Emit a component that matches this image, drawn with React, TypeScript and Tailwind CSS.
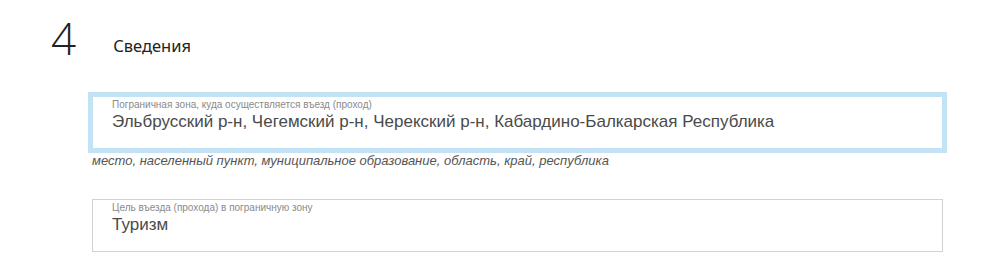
import React from "react";

function Field({
  label,
  value,
  focused
}: {
  label: string;
  value: string;
  focused?: boolean;
}) {
  return (
    <div
      className={[
        "h-[53px] w-[851px] border bg-white pl-[19px] pt-[1px]",
        focused
          ? "border-[#c4e2f6] shadow-[0_0_0_4px_#c4e2f6]"
          : "border-[#d2d2d2]"
      ].join(" ")}
    >
      <div className="text-[10px] leading-[14px] text-[#8a8a8a]">{label}</div>
      <div className="text-[17px] leading-[20px] text-[#4a4a4a]">{value}</div>
    </div>
  );
}

export default function App() {
  return (
    <div className="h-[280px] w-[984px] bg-white font-['Liberation_Sans',Arial,sans-serif]">
      <div className="flex items-end pl-[51px] pt-[14px]">
        <span className="font-['Open_Sans',sans-serif] text-[44px] font-light leading-[48px] text-[#222]">
          4
        </span>
        <span className="mb-[6px] ml-[37px] font-['Noto_Sans',sans-serif] text-[16.5px] leading-[20px] text-[#222]">
          Сведения
        </span>
      </div>
      <div className="ml-[92px] mt-[34px]">
        <Field
          focused
          label="Пограничная зона, куда осуществляется въезд (проход)"
          value="Эльбрусский р-н, Чегемский р-н, Черекский р-н, Кабардино-Балкарская Республика"
        />
        <div className="mt-[4px] text-[13px] italic leading-[15px] text-[#555]">
          место, населенный пункт, муниципальное образование, область, край, республика
        </div>
        <div className="mt-[31px]">
          <Field
            label="Цель въезда (прохода) в пограничную зону"
            value="Туризм"
          />
        </div>
      </div>
    </div>
  );
}
